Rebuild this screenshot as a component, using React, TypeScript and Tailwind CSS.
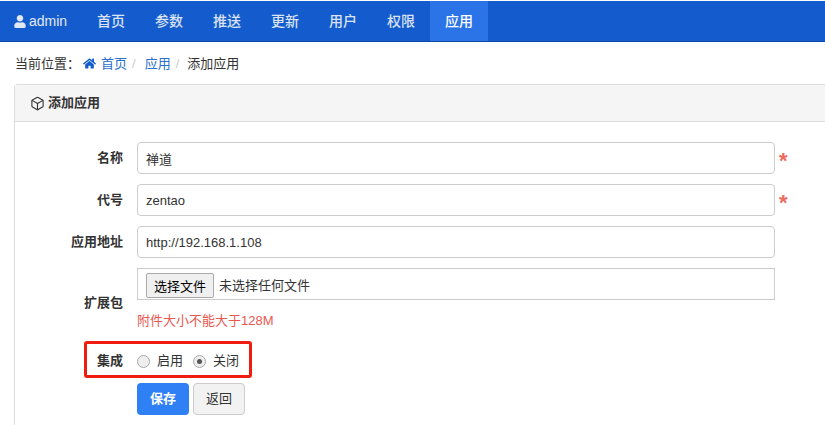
import { Box } from "lucide-react";
import { FaHome, FaUser } from "react-icons/fa";

const font = "font-['Liberation_Sans','Noto_Sans_CJK_SC',sans-serif]";
const navItems = ["首页", "参数", "推送", "更新", "用户", "权限"];

function Row({ label, children, className = "", labelClass = "pt-[6px]" }: { label: string; children: React.ReactNode; className?: string; labelClass?: string }) {
  return (
    <div className={`flex ${className}`}>
      <label className={`w-[122px] shrink-0 pr-[14px] text-right font-bold leading-[20px] text-[#333] ${labelClass}`}>{label}</label>
      {children}
    </div>
  );
}

function TextInput({ value }: { value: string }) {
  return (
    <input
      readOnly
      value={value}
      className="h-[32px] w-[638px] rounded-[4px] border border-[#ccc] bg-white px-[8px] text-[13px] text-[#333] outline-none"
    />
  );
}

function Star() {
  return <span className="ml-[4px] pt-[9px] text-[22px] font-bold leading-[20px] text-[#ec6a60]">*</span>;
}

export default function App() {
  return (
    <div className={`relative h-[425px] w-[825px] overflow-hidden bg-white text-[13px] text-[#333] ${font}`}>
      <header className="mt-[1px] flex h-[41px] items-stretch border-b border-[#0d47a1] bg-[#145ccd] text-[14px]">
        <div className="flex w-[82px] items-center pl-[14px] text-[#e3e8f3]">
          <FaUser className="mr-[3px] h-[13px] w-[12px]" />
          <span>admin</span>
        </div>
        {navItems.map((item) => (
          <a key={item} className="flex w-[58px] items-center justify-center font-medium text-[#dbe3f2]">
            {item}
          </a>
        ))}
        <a className="flex w-[58px] items-center justify-center bg-[#2b74e8] font-medium text-white">应用</a>
      </header>

      <nav className="flex h-[42px] items-center pl-[15px] pt-[1px]">
        <span className="w-[68px]">当前位置：</span>
        <FaHome className="h-[13px] w-[13px] text-[#145ccd]" />
        <a className="ml-[5px] text-[#2a6fc9]">首页</a>
        <span className="ml-[5px] text-[#ccc]">/</span>
        <a className="ml-[9px] text-[#2a6fc9]">应用</a>
        <span className="ml-[5px] text-[#ccc]">/</span>
        <span className="ml-[8px]">添加应用</span>
      </nav>

      <section className="ml-[14px] h-[400px] w-[900px] rounded-t-[4px] border border-b-0 border-[#ddd]">
        <div className="flex h-[37px] items-center gap-[3px] border-b border-[#ddd] bg-[#f5f5f5] pl-[15px] font-bold">
          <Box className="h-[15px] w-[15px]" strokeWidth={1.75} />
          <span>添加应用</span>
        </div>
        <form className="flex flex-col pt-[20px]">
          <Row label="名称">
            <TextInput value="禅道" />
            <Star />
          </Row>
          <Row label="代号" className="mt-[10px]">
            <TextInput value="zentao" />
            <Star />
          </Row>
          <Row label="应用地址" className="mt-[10px]">
            <TextInput value="http://192.168.1.108" />
          </Row>
          <Row label="扩展包" className="mt-[10px]" labelClass="pt-[25px]">
            <div className="flex flex-col">
              <div className="flex h-[32px] w-[638px] items-end border border-[#ccc] pb-[1px] pl-[8px]">
                <span className="flex h-[25px] w-[68px] items-center justify-center rounded-[2px] border border-[#aaa] bg-[#f0f0f0] pt-[2px] text-black">选择文件</span>
                <span className="ml-[5px] pt-[2px] leading-[25px]">未选择任何文件</span>
              </div>
              <p className="mt-[11px] leading-[20px] text-[#e9584f]">附件大小不能大于128M</p>
            </div>
          </Row>
          <Row label="集成" className="mt-[14px]">
            <div className="flex h-[32px] items-center">
              <span className="h-[13px] w-[13px] rounded-full border border-[#aaa] bg-[#eee]" />
              <span className="ml-[7px]">启用</span>
              <span className="ml-[10px] flex h-[13px] w-[13px] items-center justify-center rounded-full border border-[#aaa] bg-[#eee]">
                <span className="h-[5px] w-[5px] rounded-full bg-[#555]" />
              </span>
              <span className="ml-[7px]">关闭</span>
            </div>
          </Row>
          <div className="ml-[122px] mt-[6px] flex gap-[4px]">
            <button type="button" className="h-[32px] w-[52px] rounded-[4px] bg-[#2f7ff5] font-bold text-white">保存</button>
            <button type="button" className="h-[32px] w-[52px] rounded-[4px] border border-[#ccc] bg-[#f2f2f2]">返回</button>
          </div>
        </form>
      </section>

      <div className="absolute left-[84px] top-[341px] h-[37px] w-[168px] rounded-[3px] border-[3px] border-[#f01c10]" />
    </div>
  );
}
